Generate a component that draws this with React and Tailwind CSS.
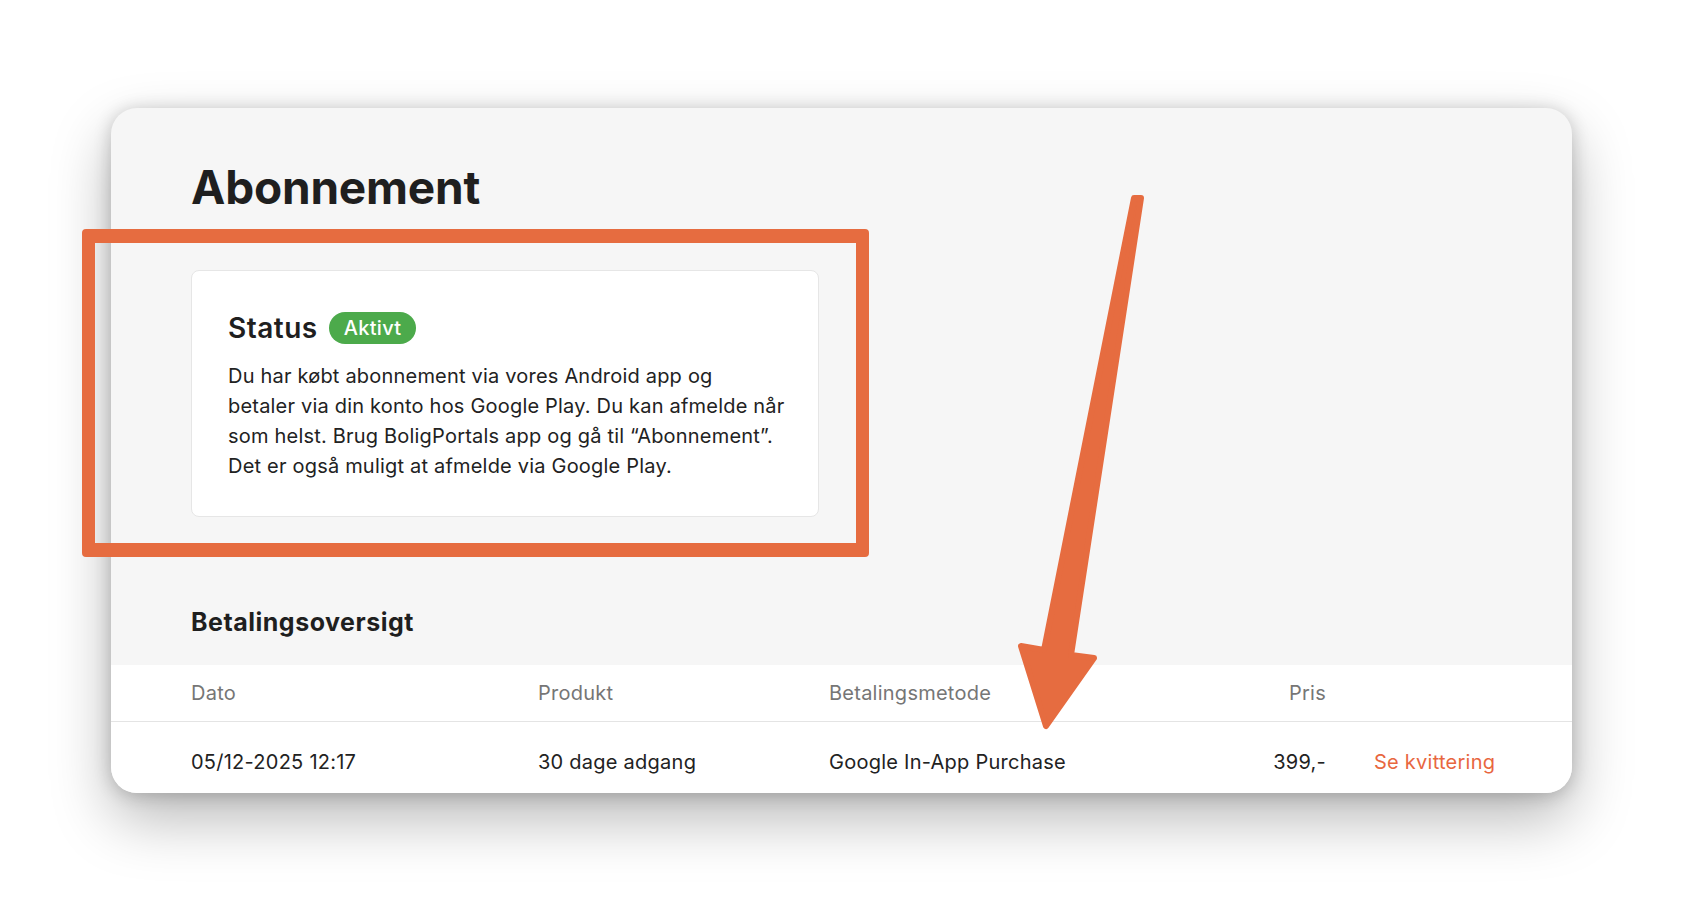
import React from "react";

const font = { fontFamily: "Inter, 'Noto Sans', 'Liberation Sans', sans-serif" };

export default function App() {
  return (
    <div className="relative w-[1682px] h-[904px] bg-white overflow-hidden" style={font}>
      <div className="pt-[108px] pl-[111px]">
        <div className="w-[1461px] h-[685px] rounded-[26px] bg-[#f6f6f6] overflow-hidden shadow-[0_26px_60px_rgba(0,0,0,0.28),0_2px_18px_rgba(0,0,0,0.2)] flex flex-col">
          <div className="pl-[80px] pt-[51px]">
            <h1 className="text-[46px] leading-[56px] font-bold text-[#1f1f1f] tracking-[-0.2px]">Abonnement</h1>
            <div className="mt-[55px] w-[628px] h-[247px] bg-white border border-[#e6e6e6] rounded-[8px] pl-[36px] pt-[39px]">
              <div className="flex items-center gap-[11px] h-[36px]">
                <span className="text-[28px] leading-[36px] font-semibold text-[#1f1f1f] tracking-[0.5px]">Status</span>
                <span className="h-[32px] px-[15px] rounded-full bg-[#4caa4b] text-white text-[20px] leading-[32px] font-medium tracking-[0.3px]">Aktivt</span>
              </div>
              <p className="mt-[15px] text-[20px] leading-[30px] text-[#222] whitespace-nowrap tracking-[0.2px]">
                Du har købt abonnement via vores Android app og
                <br />
                betaler via din konto hos Google Play. Du kan afmelde når
                <br />
                som helst. Brug BoligPortals app og gå til “Abonnement”.
                <br />
                Det er også muligt at afmelde via Google Play.
              </p>
            </div>
            <h2 className="mt-[89px] text-[25px] leading-[32px] font-bold text-[#1f1f1f] tracking-[0.5px]">Betalingsoversigt</h2>
          </div>
          <div className="mt-[27px] flex-1 bg-white text-[20px] leading-[28px] tracking-[0.25px]">
            <div className="grid grid-cols-[347px_291px_400px_97px_1fr] pl-[80px] pt-[14px] h-[57px] border-b border-[#e4e4e4] text-[#767676]">
              <div>Dato</div>
              <div>Produkt</div>
              <div>Betalingsmetode</div>
              <div className="text-right">Pris</div>
              <div></div>
            </div>
            <div className="grid grid-cols-[347px_291px_400px_97px_1fr] pl-[80px] pt-[26px] text-[#222]">
              <div>05/12-2025 12:17</div>
              <div>30 dage adgang</div>
              <div>Google In-App Purchase</div>
              <div className="text-right">399,-</div>
              <div className="pl-[48px] text-[#e8673f]">Se kvittering</div>
            </div>
          </div>
        </div>
      </div>

      <div className="absolute left-[82px] top-[229px] w-[787px] h-[328px] border-x-[13px] border-y-[14px] border-[#e66c40] rounded-[4px]"></div>

      <svg className="absolute left-0 top-0" width="1682" height="904" viewBox="0 0 1682 904">
        <polygon
          points="1134,198 1141,198 1071,655 1094,658 1046,726 1021,646 1044,650"
          fill="#e66c40"
          stroke="#e66c40"
          strokeWidth="6"
          strokeLinejoin="round"
        />
      </svg>
    </div>
  );
}
